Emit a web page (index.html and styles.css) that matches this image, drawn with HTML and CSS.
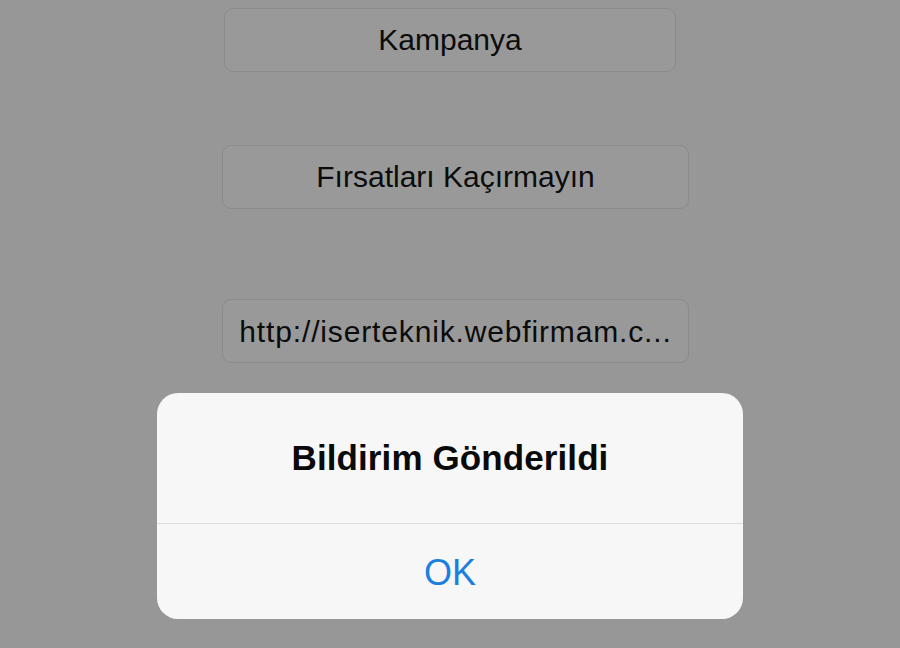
FILE: index.html
```html
<!DOCTYPE html>
<html lang="tr">
<head>
<meta charset="utf-8">
<title>Bildirim</title>
<link rel="stylesheet" href="styles.css">
</head>
<body>
<main class="screen">
  <div class="fields">
    <div class="field field-first">Kampanya</div>
    <div class="field field-second">Fırsatları Kaçırmayın</div>
    <div class="field field-third">http://iserteknik.webfirmam.c...</div>
  </div>
  <div class="alert" role="alertdialog">
    <div class="alert-body">
      <h1 class="alert-title">Bildirim Gönderildi</h1>
    </div>
    <button class="alert-button" type="button">OK</button>
  </div>
</main>
</body>
</html>
```
FILE: styles.css
```css
html, body {
  margin: 0;
  padding: 0;
}
body {
  width: 900px;
  height: 648px;
  overflow: hidden;
  background: #979797;
  font-family: "Liberation Sans", Arial, sans-serif;
  color: #0b0b0b;
}
.screen {
  position: relative;
  width: 900px;
  height: 648px;
}
.fields {
  display: flex;
  flex-direction: column;
  align-items: flex-start;
  padding-top: 8px;
}
.field {
  box-sizing: border-box;
  height: 64px;
  display: flex;
  align-items: center;
  justify-content: center;
  border: 1px solid #8b8b8b;
  border-radius: 9px;
  background: #999999;
  font-size: 30px;
  white-space: nowrap;
}
.field-first {
  margin-left: 224px;
  width: 452px;
}
.field-second {
  margin-left: 222px;
  margin-top: 73px;
  width: 467px;
}
.field-third {
  margin-left: 222px;
  margin-top: 90px;
  width: 467px;
  letter-spacing: 0.85px;
  padding-top: 1px;
}
.alert {
  position: absolute;
  left: 157px;
  top: 393px;
  width: 586px;
  height: 226px;
  display: flex;
  flex-direction: column;
  background: #f7f7f8;
  border-radius: 21px;
  overflow: hidden;
}
.alert-body {
  height: 130px;
  display: flex;
  align-items: center;
  justify-content: center;
  border-bottom: 1px solid #dcdcdf;
}
.alert-title {
  margin: 0;
  font-size: 35px;
  font-weight: bold;
  color: #0a0a0a;
  letter-spacing: 0.1px;
}
.alert-button {
  flex: 1;
  border: 0;
  background: transparent;
  font-family: "Liberation Sans", Arial, sans-serif;
  font-size: 36px;
  color: #1b7fe0;
  padding: 0;
  padding-top: 3px;
}
```
